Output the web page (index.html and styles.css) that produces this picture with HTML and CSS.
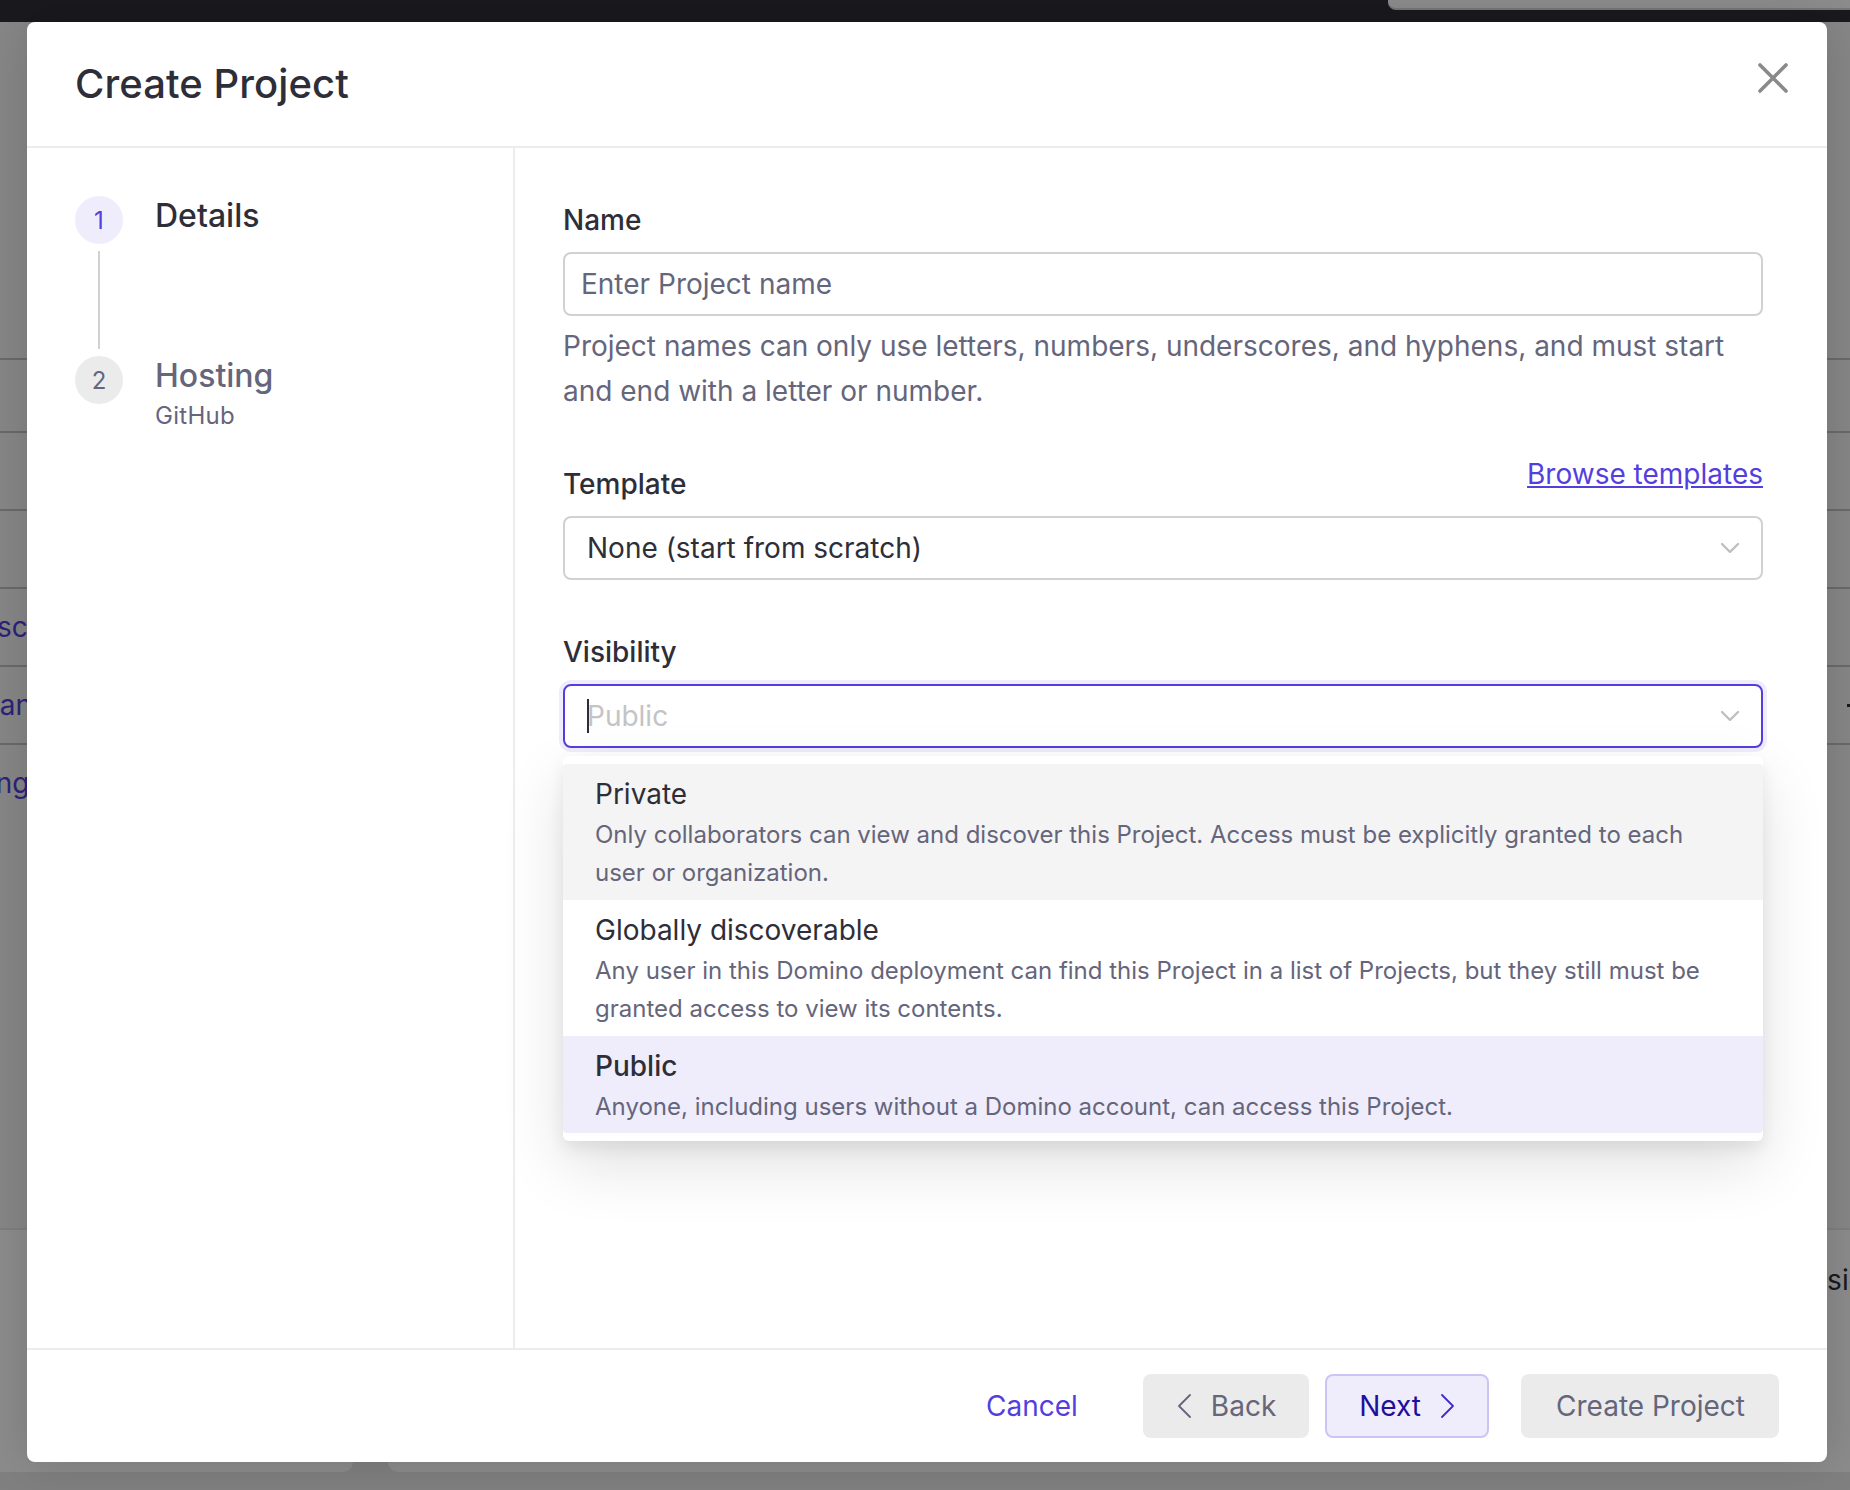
FILE: index.html
```html
<!DOCTYPE html>
<html lang="en">
<head>
<meta charset="utf-8">
<title>Create Project</title>
<link rel="stylesheet" href="styles.css">
</head>
<body>
<div class="page">
  <div class="topbar"><div class="toptab"></div></div>
  <div class="bg-rows">
    <div class="bg-row bg-row-short"></div>
    <div class="bg-row bg-row-short"></div>
    <div class="bg-row"></div>
    <div class="bg-row"></div>
    <div class="bg-row bg-link"><span class="frag-a">Misc</span></div>
    <div class="bg-row bg-link"><span class="frag-b">Plan</span><span class="row-mark"></span></div>
    <div class="bg-row bg-link"><span class="frag-c">Change</span></div>
  </div>
  <div class="bg-gap"></div>
  <div class="bg-panels">
    <div class="bg-panel bg-panel-left"></div>
    <div class="bg-panel bg-panel-right"><span class="frag-d">Version</span></div>
  </div>
</div>
<div class="backdrop"></div>
<section class="modal" role="dialog" aria-label="Create Project">
  <header class="modal-head">
    <h1 class="modal-title">Create Project</h1>
    <svg class="close-icon" viewBox="0 0 30 30" aria-hidden="true"><path d="M2 2 L28 28 M28 2 L2 28"/></svg>
  </header>
  <div class="modal-body">
    <aside class="steps">
      <div class="step step-first">
        <div class="step-marker">
          <div class="step-num step-num-active">1</div>
          <div class="step-line"></div>
        </div>
        <div class="step-text"><div class="step-title">Details</div></div>
      </div>
      <div class="step">
        <div class="step-marker"><div class="step-num">2</div></div>
        <div class="step-text">
          <div class="step-title step-title-muted">Hosting</div>
          <div class="step-sub">GitHub</div>
        </div>
      </div>
    </aside>
    <main class="form">
      <div class="field field-name">
        <label class="label">Name</label>
        <input class="input" type="text" placeholder="Enter Project name">
        <p class="help">Project names can only use letters, numbers, underscores, and hyphens, and must start and end with a letter or number.</p>
      </div>
      <div class="field field-template">
        <div class="label-row">
          <label class="label">Template</label>
          <a class="browse" href="#">Browse templates</a>
        </div>
        <div class="select">
          <span class="select-value">None (start from scratch)</span>
          <svg class="chevron" viewBox="0 0 18 10" aria-hidden="true"><path d="M1 1 L9 9 L17 1"/></svg>
        </div>
      </div>
      <div class="field field-last">
        <label class="label">Visibility</label>
        <div class="select select-focus">
          <span class="caret"></span>
          <span class="select-placeholder">Public</span>
          <svg class="chevron" viewBox="0 0 18 10" aria-hidden="true"><path d="M1 1 L9 9 L17 1"/></svg>
        </div>
        <div class="dropdown">
          <div class="option option-hover">
            <div class="option-name">Private</div>
            <div class="option-desc">Only collaborators can view and discover this Project. Access must be explicitly granted to each user or organization.</div>
          </div>
          <div class="option">
            <div class="option-name">Globally discoverable</div>
            <div class="option-desc">Any user in this Domino deployment can find this Project in a list of Projects, but they still must be granted access to view its contents.</div>
          </div>
          <div class="option option-selected">
            <div class="option-name">Public</div>
            <div class="option-desc">Anyone, including users without a Domino account, can access this Project.</div>
          </div>
        </div>
      </div>
    </main>
  </div>
  <footer class="modal-foot">
    <a class="cancel" href="#">Cancel</a>
    <button class="btn btn-back" type="button">
      <svg class="btn-chev" viewBox="0 0 14 24" aria-hidden="true"><path d="M13 1 L2 12 L13 23"/></svg>
      <span>Back</span>
    </button>
    <button class="btn btn-next" type="button">
      <span>Next</span>
      <svg class="btn-chev" viewBox="0 0 14 24" aria-hidden="true"><path d="M1 1 L12 12 L1 23"/></svg>
    </button>
    <button class="btn btn-create" type="button">Create Project</button>
  </footer>
</section>
</body>
</html>
```
FILE: styles.css
```css
* { box-sizing: border-box; }
html, body { margin: 0; padding: 0; }
body {
  width: 1850px;
  height: 1490px;
  overflow: hidden;
  position: relative;
  font-family: Inter, "Liberation Sans", sans-serif;
  color: #2e2e38;
}

/* Page behind the dialog */
.page {
  height: 1490px;
  background: #e9e9e9;
  display: flex;
  flex-direction: column;
}
.topbar {
  height: 22px;
  background: #2f2f38;
  display: flex;
  justify-content: flex-end;
  flex-shrink: 0;
}
.toptab {
  width: 462px;
  height: 10px;
  background: #fff;
  border-bottom: 2px solid #d8d8d8;
  border-radius: 0 0 0 8px;
}
.bg-rows {
  background: #f6f6f6;
  padding-top: 265px;
  height: 799px;
  flex-shrink: 0;
}
.bg-row {
  height: 78px;
  border-bottom: 2px solid #c2c2c2;
  display: flex;
  align-items: center;
  font-size: 28px;
  white-space: nowrap;
  overflow: hidden;
}
.bg-row-short { height: 73px; }
.bg-link { color: #543fde; }
.frag-a { margin-left: -35px; }
.frag-b { margin-left: -25px; }
.frag-c { margin-left: -57px; }
.row-mark {
  width: 3px;
  height: 3px;
  margin-left: auto;
  background: #2e2e38;
}
.bg-gap {
  height: 407px;
  background: #f6f6f6;
  flex-shrink: 0;
}
.bg-panels {
  display: flex;
  gap: 35px;
  height: 244px;
  flex-shrink: 0;
}
.bg-panel {
  background: #fff;
  border-top: 2px solid #e8e8e8;
}
.bg-panel-left { width: 353px; border-radius: 0 0 10px 0; }
.bg-panel-right {
  flex: 1;
  border-radius: 0 0 0 10px;
  overflow: hidden;
  white-space: nowrap;
  font-size: 28px;
  color: #2e2e38;
  display: flex;
  justify-content: flex-end;
  padding-top: 33px;
}
.frag-d { margin-right: -32px; }

.backdrop {
  position: absolute;
  inset: 0;
  background: rgba(0, 0, 0, 0.45);
}

/* Dialog */
.modal {
  position: absolute;
  left: 27px;
  top: 22px;
  width: 1800px;
  height: 1440px;
  background: #fff;
  border-radius: 8px;
  box-shadow: 0 0 48px rgba(0, 0, 0, 0.16);
  display: flex;
  flex-direction: column;
}
.modal-head {
  height: 126px;
  flex-shrink: 0;
  border-bottom: 2px solid #ededed;
  padding: 0 39px 0 48px;
  display: flex;
  justify-content: space-between;
  align-items: flex-start;
}
.modal-title {
  margin: 37px 0 0;
  font-size: 40px;
  line-height: 50px;
  font-weight: 500;
  letter-spacing: 0.08px;
  color: #2e2e38;
}
.close-icon {
  width: 30px;
  height: 30px;
  margin-top: 41px;
  fill: none;
  stroke: #8a8a8a;
  stroke-width: 3.6;
  stroke-linecap: round;
}
.modal-body {
  flex: 1;
  display: flex;
  min-height: 0;
}

/* Steps */
.steps {
  width: 488px;
  flex-shrink: 0;
  border-right: 2px solid #ededed;
  padding: 48px 0 0 48px;
}
.step { display: flex; gap: 32px; }
.step-first { height: 160px; }
.step-marker {
  width: 48px;
  display: flex;
  flex-direction: column;
  align-items: center;
}
.step-num {
  width: 48px;
  height: 48px;
  border-radius: 50%;
  background: #ebebeb;
  color: #65657b;
  font-size: 24px;
  display: flex;
  align-items: center;
  justify-content: center;
  flex-shrink: 0;
}
.step-num-active { background: #efedfb; color: #543fde; }
.step-line {
  width: 2px;
  height: 98px;
  margin-top: 7px;
  background: #d1d1d1;
}
.step-title {
  font-size: 32px;
  line-height: 40px;
  font-weight: 500;
  color: #2e2e38;
}
.step-title-muted { color: #65657b; }
.step-sub {
  margin-top: 1px;
  font-size: 24px;
  line-height: 38px;
  letter-spacing: 0.3px;
  color: #65657b;
}

/* Form */
.form {
  flex: 1;
  padding: 50px 64px 0 48px;
  min-width: 0;
}
.field { position: relative; }
.field-name { margin-bottom: 48.4px; }
.field-template { margin-bottom: 50px; }
.label {
  display: block;
  font-size: 28px;
  line-height: 44px;
  font-weight: 500;
  color: #2e2e38;
  margin-bottom: 10px;
}
.label-row {
  display: flex;
  justify-content: space-between;
  align-items: flex-start;
}
.browse {
  font-size: 28px;
  line-height: 25px;
  color: #543fde;
  text-decoration: underline;
}
.input {
  display: block;
  width: 100%;
  height: 64px;
  border: 2px solid #d1d1d1;
  border-radius: 8px;
  padding: 0 16px;
  font: inherit;
  font-size: 28px;
  color: #2e2e38;
  background: #fff;
  outline: none;
}
.input::placeholder { color: #65657b; opacity: 1; }
.help {
  margin: 8px 0 0;
  font-size: 28px;
  line-height: 44.8px;
  color: #65657b;
}
.select {
  height: 64px;
  border: 2px solid #d1d1d1;
  border-radius: 8px;
  padding: 0 22px 0 22px;
  display: flex;
  align-items: center;
  font-size: 28px;
  background: #fff;
}
.select-value { color: #2e2e38; flex: 1; }
.select-placeholder { color: #c4c4c4; flex: 1; }
.select-focus {
  border-color: #543fde;
  box-shadow: 0 0 0 4px #efedfb;
}
.caret {
  width: 2px;
  height: 34px;
  background: #2e2e38;
  margin-right: -2px;
  flex-shrink: 0;
}
.chevron {
  width: 18px;
  height: 10px;
  fill: none;
  stroke: #bfbfbf;
  stroke-width: 2.4;
  stroke-linecap: round;
  stroke-linejoin: round;
  flex-shrink: 0;
}

/* Dropdown */
.dropdown {
  position: absolute;
  left: 0;
  right: 0;
  top: 126px;
  background: #fff;
  border-radius: 6px;
  padding: 8px 0;
  box-shadow: 0 24px 64px rgba(0, 0, 0, 0.12), 0 8px 16px rgba(0, 0, 0, 0.07);
  z-index: 2;
}
.option { padding: 12px 32px 7px; }
.option-hover { background: #f4f4f4; border-radius: 4px 4px 0 0; }
.option-selected { background: #efedfb; border-radius: 0 0 4px 4px; }
.option-name {
  font-size: 28px;
  line-height: 36px;
  color: #2e2e38;
  margin-bottom: 4px;
}
.option-selected .option-name { font-weight: 500; }
.option-desc {
  font-size: 24px;
  line-height: 38.4px;
  color: #65657b;
}

/* Footer */
.modal-foot {
  height: 114px;
  flex-shrink: 0;
  border-top: 2px solid #ededed;
  padding: 24px 48px 0 0;
  display: flex;
  justify-content: flex-end;
  align-items: flex-start;
}
.cancel {
  font-size: 28px;
  line-height: 64px;
  color: #543fde;
  text-decoration: none;
  margin-right: 65px;
}
.btn {
  height: 64px;
  border: 0;
  border-radius: 8px;
  padding: 0 33px 0 34px;
  font: inherit;
  font-size: 28px;
  display: flex;
  align-items: center;
  gap: 20px;
  background: #ebebeb;
  color: #65657b;
}
.btn-back { margin-right: 16px; }
.btn-next {
  margin-right: 32px;
  background: #efedfb;
  color: #1f0f9c;
  border: 2px solid #cbc5f5;
  padding: 0 32px;
}
.btn-create { padding: 0 34px 0 35px; }
.btn-chev {
  width: 14px;
  height: 24px;
  fill: none;
  stroke: currentColor;
  stroke-width: 1.8;
  stroke-linecap: round;
  stroke-linejoin: round;
}
.btn-back .btn-chev { stroke: #65657b; }
.btn-next .btn-chev { stroke: #3f2cc8; }
```
